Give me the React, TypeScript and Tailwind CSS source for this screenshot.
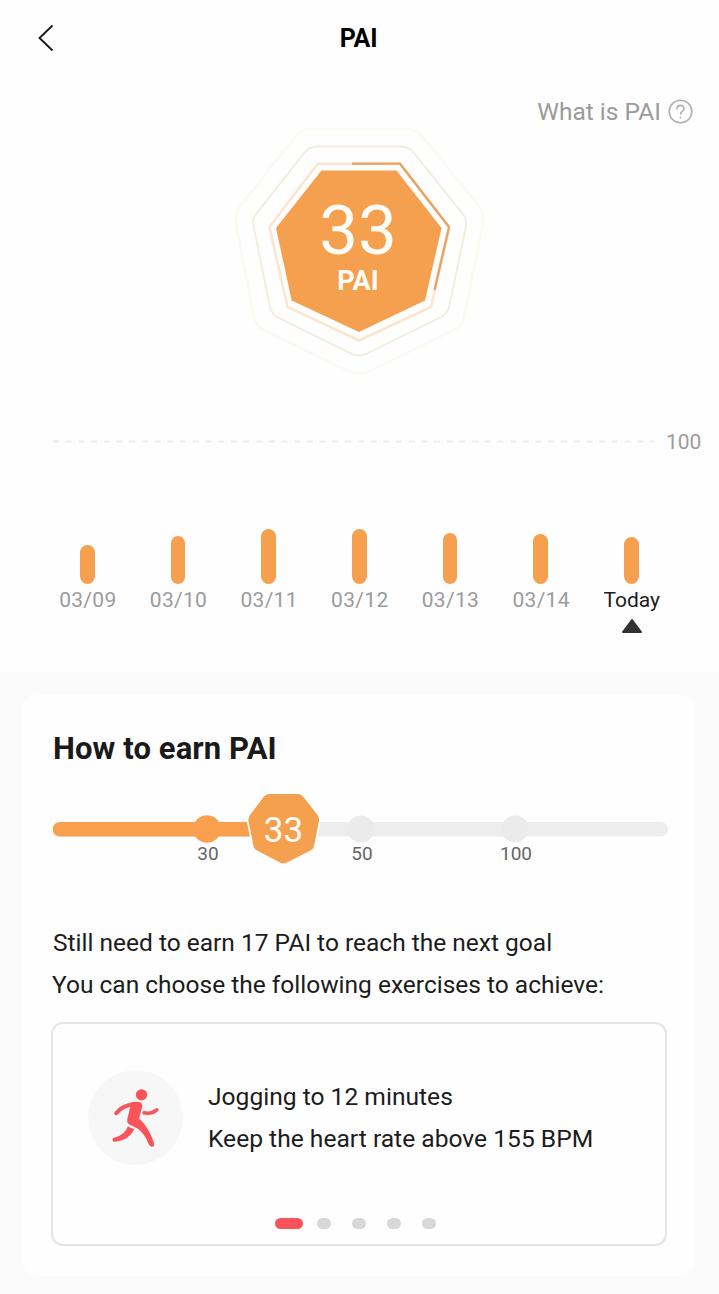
const days = [
  { label: "03/09", height: 39.5 },
  { label: "03/10", height: 48 },
  { label: "03/11", height: 55 },
  { label: "03/12", height: 55.5 },
  { label: "03/13", height: 51.5 },
  { label: "03/14", height: 50.5 },
  { label: "Today", height: 47.5, current: true },
];

function Header() {
  return (
    <header className="grid h-[76px] grid-cols-3 items-center pl-[37px]">
      <svg width="18" height="28" viewBox="0 0 18 28" fill="none" stroke="#1c1c1c" strokeWidth="1.9">
        <path d="M15.5 1.5 L2.5 14 L15.5 26.5" />
      </svg>
      <h1 className="-ml-[39px] pt-[1px] text-center text-[25px] leading-none font-bold tracking-[-0.2px] text-black">PAI</h1>
    </header>
  );
}

function ScoreBadge() {
  return (
    <div className="grid h-[280px] w-[280px] place-items-center">
      <svg className="col-start-1 row-start-1" width="280" height="280" viewBox="220 110 280 280" fill="none">
        <path
          d="M311 129 H406 Q417 129 423 137 L478 205 Q485 214 483 224 L464 317 Q462 326 454 330 L372 370 Q359 377 346 370 L264 330 Q256 326 254 317 L236 224 Q234 214 241 205 L295 137 Q301 129 311 129 Z"
          stroke="#fcf9f3"
          strokeWidth="2.5"
        />
        <path
          d="M317 146.500 H401 Q409 146.500 414 153 L462 213 Q467 219 466 226 L449 307 Q447 314 441 317 L368 353 Q359 358 350 353 L277 317 Q272 314 270 307 L253.500 226 Q252 219 257 213 L304 153 Q309 146.500 317 146.500 Z"
          stroke="#f2ebdf"
          strokeWidth="1.8"
        />
        <path d="M317.700 163.700 H400 L449.500 227 L431 307 L359 340.500 L287.500 307 L269.500 227 Z" stroke="#fbe5d0" strokeWidth="2.5" />
        <path d="M352 163.700 H400 L449 227 L434.500 290" stroke="#e9a25e" strokeWidth="2.3" />
        <path d="M321.500 170.500 H396.500 L441.500 228 L425 300.500 L359 332 L291.700 300.500 L276 228 Z" fill="#f5a04e" />
      </svg>
      <div className="z-10 col-start-1 row-start-1 -mt-[7px] -ml-[3px] flex flex-col items-center text-[#fffdf7]">
        <span className="pt-[1px] text-[69px] leading-[68px]">33</span>
        <span className="text-[27px] leading-[32px] font-bold">PAI</span>
      </div>
    </div>
  );
}

function Summary() {
  return (
    <section className="flex flex-col items-center">
      <div className="flex h-[70px] w-full items-center justify-end gap-[7px] pr-[26px] text-[24.5px] leading-none text-[#9b9b9b]">
        <span className="pt-[2px]">What is PAI</span>
        <svg width="25" height="25" viewBox="0 0 25 25" fill="none" stroke="#b0b0b0" strokeWidth="1.6" strokeLinecap="round">
          <circle cx="12.500" cy="12.500" r="11.300" />
          <path d="M9 9.800 C9 5.200 16 5.200 16 9.700 C16 12.300 12.500 12.200 12.500 15.300" />
          <path d="M12.500 18.400 V18.700" />
        </svg>
      </div>
      <div className="-mt-[36px]">
        <ScoreBadge />
      </div>
    </section>
  );
}

function WeekChart() {
  return (
    <section className="flex flex-col pt-[36px]">
      <div className="flex h-[31px] items-center gap-[12px] pl-[53px] text-[#9b9b9b]">
        <svg width="601" height="3" viewBox="0 0 601 3">
          <path d="M0 1.500 H601" stroke="#ececec" strokeWidth="1.800" strokeDasharray="6 6.700" />
        </svg>
        <span className="pt-[2px] text-[21px] leading-none">100</span>
      </div>
      <div className="flex h-[127px] items-end pl-[42px]">
        {days.map((day) => (
          <div key={day.label} className="flex w-[90.67px] justify-center">
            <div className="w-[14.500px] rounded-full bg-[#f5a04e]" style={{ height: day.height }} />
          </div>
        ))}
      </div>
      <div className="flex h-[88px] pl-[42.5px]">
        {days.map((day) => (
          <div key={day.label} className="flex w-[90.67px] flex-col items-center gap-[6px] pt-[4px]">
            <span
              className={
                day.current
                  ? "text-[21px] leading-[24px] text-[#1c1c1c]"
                  : "text-[21px] leading-[24px] tracking-[0.3px] text-[#9b9b9b]"
              }
            >
              {day.label}
            </span>
            {day.current && (
              <svg width="22" height="16" viewBox="0 0 22 16">
                <path d="M11 2 L20 14 H2 Z" fill="#333" stroke="#333" strokeWidth="2" strokeLinejoin="round" />
              </svg>
            )}
          </div>
        ))}
      </div>
    </section>
  );
}

function GoalSlider() {
  return (
    <div className="mt-[25px] grid h-[76px]">
      <svg className="col-start-1 row-start-1" width="616" height="76" viewBox="53 791 616 76">
        <rect x="53" y="822" width="615" height="14.500" rx="7.250" fill="#ededed" />
        <circle cx="361" cy="829" r="13.500" fill="#ebebeb" />
        <circle cx="515" cy="829" r="13.500" fill="#ebebeb" />
        <path d="M60 822 H260 V836.500 H60 A7.250 7.250 0 0 1 60 822 Z" fill="#f9a04f" />
        <circle cx="207" cy="829" r="13.800" fill="#f9a04f" />
        <path
          d="M269 794 H298 Q301 794 303 796.500 L317.500 815 Q319.500 818 319 821 L314 846 Q313.500 849 310.500 850.500 L287 862.500 Q283.500 864.500 280 862.500 L257 850.500 Q254 849 253.500 846 L248.500 821 Q248 818 250 815 L264 796.500 Q266 794 269 794 Z"
          fill="#f5a04e"
          stroke="#fff"
          strokeWidth="3.500"
          paintOrder="stroke"
        />
      </svg>
      <div className="z-10 col-start-1 row-start-1 grid h-[76px] w-[616px] grid-cols-4 text-[19px] leading-[22px] text-[#666]">
        <div className="col-span-4 row-start-1 flex h-[52px] pt-[22px] pl-[192.5px]">
          <span className="w-[76px] text-center text-[35px] leading-[36px] text-[#fffdf7]">33</span>
        </div>
        <div className="col-span-4 row-start-2 flex h-[24px] pl-[117px]">
          <span className="w-[76px] text-center">30</span>
          <span className="ml-[78px] w-[76px] text-center">50</span>
          <span className="ml-[78px] w-[76px] text-center">100</span>
        </div>
      </div>
    </div>
  );
}

function RunnerIcon() {
  return (
    <svg width="95" height="95" viewBox="22.500 27.500 285 285" fill="none" strokeLinecap="round" strokeLinejoin="round">
      <circle cx="165" cy="170" r="142" fill="#f7f7f7" />
      <circle cx="183" cy="102" r="17" fill="#f9545a" />
      <path d="M107 157 Q128 132 160 131" stroke="#f9545a" strokeWidth="12" />
      <path
        d="M150 125 Q182 119 185 131 Q187 137 182 150 L176 173 Q206 200 221 248 Q222 258 214 258 Q207 258 204 249 Q192 218 172 204 L145 190 Q138 185 140 176 L149 139 Z"
        fill="#f9545a"
      />
      <path d="M191 156 Q212 161 229 147" stroke="#f9545a" strokeWidth="11" />
      <path d="M142 197 L161 205 Q151 226 130 236 Q117 242 103 243 Q95 242 96 235 Q97 230 105 229 Q133 222 142 197 Z" fill="#f9545a" />
    </svg>
  );
}

function ExerciseCard() {
  return (
    <div className="mt-[16px] -ml-[2px] flex h-[224px] w-[616px] flex-col rounded-[12px] border-2 border-[#e5e5e5]">
      <div className="flex h-[185px] items-center gap-[25px] pt-[1px] pl-[35px]">
        <RunnerIcon />
        <div className="pt-[2px] text-[24.6px] leading-[42px] text-[#1c1c1c]">
          <p>Jogging to 12 minutes</p>
          <p>Keep the heart rate above 155 BPM</p>
        </div>
      </div>
      <div className="flex items-center pt-[9px] pl-[222px]">
        <span className="h-[11px] w-[28px] rounded-full bg-[#f9545a]" />
        <span className="ml-[14px] h-[11px] w-[14px] rounded-full bg-[#d8d8d8]" />
        <span className="ml-[21px] h-[11px] w-[14px] rounded-full bg-[#d8d8d8]" />
        <span className="ml-[21px] h-[11px] w-[14px] rounded-full bg-[#d8d8d8]" />
        <span className="ml-[21px] h-[11px] w-[14px] rounded-full bg-[#d8d8d8]" />
      </div>
    </div>
  );
}

export default function App() {
  return (
    <main className="flex h-[1294px] w-[719px] flex-col overflow-hidden bg-[#fefefe] font-['Roboto','Liberation_Sans',sans-serif]">
      <Header />
      <Summary />
      <WeekChart />
      <section className="h-[622px] bg-[#fbfbfb] px-[23px] pt-[23px]">
        <div className="h-[581px] w-[672px] rounded-[14px] bg-[#fefefe] pt-[37px] pl-[30px]">
          <h2 className="text-[31px] leading-[34px] font-bold tracking-[0.1px] text-[#1a1a1a]">How to earn PAI</h2>
          <GoalSlider />
          <div className="mt-[55px] text-[24.5px] leading-[42px] text-[#1c1c1c]">
            <p>Still need to earn 17 PAI to reach the next goal</p>
            <p className="-ml-[1px]">You can choose the following exercises to achieve:</p>
          </div>
          <ExerciseCard />
        </div>
      </section>
    </main>
  );
}
